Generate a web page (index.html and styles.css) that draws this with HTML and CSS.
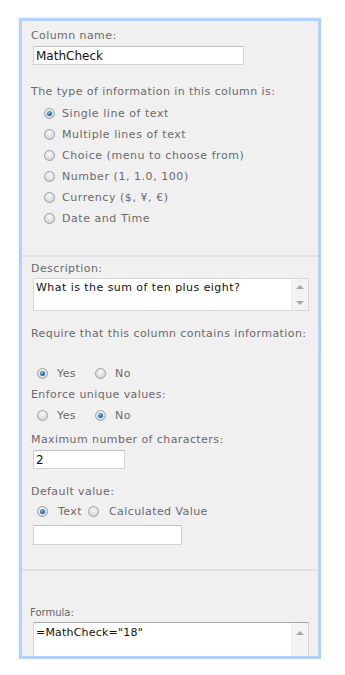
FILE: index.html
```html
<!DOCTYPE html>
<html lang="en">
<head>
    <meta charset="UTF-8">
    <meta name="viewport" content="width=device-width, initial-scale=1.0">
    <title>Column settings</title>
    <link rel="stylesheet" href="styles.css">
</head>
<body>
    <div class="panel">
        <div class="section section-type">
            <div class="label">Column name:</div>
            <input class="text-input name-input" type="text" value="MathCheck">

            <div class="label type-label">The type of information in this column is:</div>
            <div class="radio-list">
                <label class="radio-row"><span class="radio checked"></span>Single line of text</label>
                <label class="radio-row"><span class="radio"></span>Multiple lines of text</label>
                <label class="radio-row"><span class="radio"></span>Choice (menu to choose from)</label>
                <label class="radio-row"><span class="radio"></span>Number (1, 1.0, 100)</label>
                <label class="radio-row"><span class="radio"></span>Currency ($, ¥, €)</label>
                <label class="radio-row"><span class="radio"></span>Date and Time</label>
            </div>
        </div>

        <div class="section section-settings">
            <div class="label">Description:</div>
            <div class="textbox desc-box">
                <textarea class="textbox-area desc-text">What is the sum of ten plus eight?</textarea>
                <div class="scrollbar">
                    <span class="arrow-up"></span>
                    <span class="arrow-down"></span>
                </div>
            </div>

            <div class="label require-label">Require that this column contains information:</div>
            <div class="inline-radios require-radios">
                <label class="radio-inline"><span class="radio checked"></span>Yes</label>
                <label class="radio-inline"><span class="radio"></span>No</label>
            </div>

            <div class="label unique-label">Enforce unique values:</div>
            <div class="inline-radios unique-radios">
                <label class="radio-inline"><span class="radio"></span>Yes</label>
                <label class="radio-inline"><span class="radio checked"></span>No</label>
            </div>

            <div class="label max-label">Maximum number of characters:</div>
            <input class="text-input max-input" type="text" value="2">

            <div class="label default-label">Default value:</div>
            <div class="inline-radios default-radios">
                <label class="radio-inline tight"><span class="radio checked"></span>Text</label>
                <label class="radio-inline tight"><span class="radio"></span>Calculated Value</label>
            </div>
            <input class="text-input default-input" type="text" value="">
        </div>

        <div class="section section-formula">
            <div class="formula-label">Formula:</div>
            <div class="textbox formula-box">
                <textarea class="textbox-area formula-text">=MathCheck="18"</textarea>
                <div class="scrollbar">
                    <span class="arrow-up"></span>
                </div>
            </div>
        </div>
    </div>
</body>
</html>
```

FILE: styles.css
```css
body {
    margin: 0;
    background-color: #fff;
    font-family: "DejaVu Sans", Verdana, sans-serif;
    font-size: 11px;
    letter-spacing: 0.42px;
}
.panel {
    box-sizing: border-box;
    width: 302px;
    height: 641px;
    margin: 18px 0 0 19px;
    background-color: #f0f0f0;
    border: 3px solid #b4d2f7;
    box-shadow: 0 0 2px #c8def9;
    overflow: hidden;
}
.section {
    padding-left: 9px;
}
.section-type {
    padding-top: 8px;
    padding-bottom: 26px;
}
.section-settings {
    border-top: 2px solid #e2e2e2;
    padding-top: 5px;
    padding-bottom: 24px;
}
.section-formula {
    border-top: 2px solid #e2e2e2;
    padding-top: 35px;
    padding-left: 8px;
}
.label {
    color: #6a6a6a;
    line-height: 14px;
}
.text-input {
    display: block;
    box-sizing: border-box;
    height: 19px;
    margin: 3px 0 0 2px;
    padding: 0 2px;
    border: 1px solid #d3d3d3;
    border-top-color: #c2c2c2;
    background: #fff;
    font-family: "DejaVu Sans", Verdana, sans-serif;
    font-size: 12px;
    letter-spacing: 0;
    color: #111;
    outline: none;
}
.name-input {
    width: 211px;
}
.type-label {
    margin-top: 20px;
}
.radio-list {
    margin-top: 4px;
    padding-left: 13px;
    letter-spacing: 0.55px;
}
.radio-row {
    display: flex;
    align-items: center;
    height: 21px;
    color: #6a6a6a;
}
.radio {
    box-sizing: border-box;
    display: inline-block;
    flex: none;
    width: 11px;
    height: 11px;
    margin-right: 7px;
    border-radius: 50%;
    border: 1px solid #a0a0a0;
    background: radial-gradient(circle at 50% 35%, #fafafa 0%, #e0e0e0 55%, #c9c9c9 100%);
    position: relative;
}
.radio.checked::after {
    content: "";
    position: absolute;
    left: 2px;
    top: 2px;
    width: 5px;
    height: 5px;
    border-radius: 50%;
    background: radial-gradient(circle at 40% 35%, #7fc3ec 0%, #1d78b8 50%, #0d4f86 100%);
}
.textbox {
    display: flex;
    box-sizing: border-box;
    width: 276px;
    margin-left: 2px;
    border: 1px solid #d6d6d6;
    background: #fff;
}
.textbox-area {
    flex: 1;
    border: none;
    resize: none;
    overflow: hidden;
    padding: 1px 2px;
    margin: 0;
    background: #fff;
    font-family: "DejaVu Sans", Verdana, sans-serif;
    letter-spacing: 0.45px;
    color: #111;
    outline: none;
}
.desc-box {
    height: 33px;
    margin-top: 2px;
}
.desc-text {
    font-size: 11px;
    line-height: 16px;
}
.scrollbar {
    width: 17px;
    border-left: 1px solid #ececec;
    background: #f3f3f3;
    display: flex;
    flex-direction: column;
    justify-content: space-between;
    align-items: center;
    padding: 6px 0 5px;
    box-sizing: border-box;
}
.arrow-up {
    width: 0;
    height: 0;
    border-left: 4px solid transparent;
    border-right: 4px solid transparent;
    border-bottom: 4px solid #a8a8a8;
}
.arrow-down {
    width: 0;
    height: 0;
    border-left: 4px solid transparent;
    border-right: 4px solid transparent;
    border-top: 4px solid #a8a8a8;
}
.require-label {
    margin-top: 16px;
}
.inline-radios {
    display: flex;
    align-items: center;
    height: 21px;
    padding-left: 6px;
    color: #6a6a6a;
}
.radio-inline {
    display: flex;
    align-items: center;
    margin-right: 19px;
}
.radio-inline .radio {
    margin-right: 9px;
}
.radio-inline.tight {
    margin-right: 6px;
}
.radio-inline.tight .radio {
    margin-right: 10px;
}
.require-radios {
    margin-top: 22px;
}
.unique-label {
    margin-top: 4px;
}
.unique-radios {
    margin-top: 3px;
}
.max-label {
    margin-top: 7px;
}
.max-input {
    width: 92px;
}
.default-label {
    margin-top: 16px;
}
.default-radios {
    margin-top: 2px;
}
.default-input {
    width: 149px;
    height: 20px;
    margin-top: 3px;
}
.formula-label {
    color: #666;
    font-size: 10px;
    letter-spacing: 0;
    line-height: 14px;
}
.formula-box {
    width: 276px;
    margin-left: 3px;
    margin-top: 2px;
    height: 60px;
    border-top-color: #a9a9a9;
}
.formula-text {
    font-size: 11px;
    line-height: 18px;
    letter-spacing: 0.2px;
    padding-left: 2px;
}
.formula-box .scrollbar {
    justify-content: flex-start;
    padding-top: 8px;
}
```
